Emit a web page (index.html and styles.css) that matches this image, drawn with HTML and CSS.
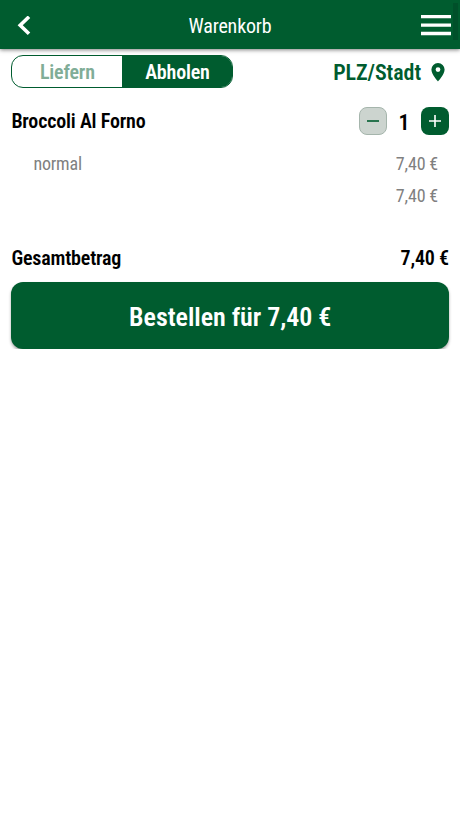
FILE: index.html
```
<!DOCTYPE html>
<html lang="de">
<head>
    <meta charset="UTF-8">
    <meta name="viewport" content="width=device-width, initial-scale=1.0">
    <title>Warenkorb</title>
    <link rel="stylesheet" href="styles.css">
</head>
<body>
    <header class="header">
        <svg class="icon-back" width="14" height="20" viewBox="0 0 14 20"><path d="M12 .8L3.2 9.2l8.8 8.6"/></svg>
        <h1 class="title">Warenkorb</h1>
        <svg class="icon-menu" width="30" height="21" viewBox="0 0 30 21"><path d="M0 1.7h30M0 10.2h30M0 18.5h30"/></svg>
        <span class="scrollbar"></span>
    </header>
    <main class="content">
        <div class="options">
            <div class="toggle">
                <span class="toggle-item">Liefern</span>
                <span class="toggle-item active">Abholen</span>
            </div>
            <div class="location">
                <span>PLZ/Stadt</span>
                <svg width="14" height="19" viewBox="0 0 14 19"><path fill-rule="evenodd" d="M7 0a6.6 6.6 0 0 0-6.6 6.6C.4 11.5 7 18.5 7 18.5s6.6-7 6.6-11.9A6.6 6.6 0 0 0 7 0zm0 4.2a2.4 2.4 0 1 1 0 4.8 2.4 2.4 0 0 1 0-4.8z"/></svg>
            </div>
        </div>
        <div class="item">
            <span class="item-name">Broccoli Al Forno</span>
            <div class="counter">
                <button class="btn minus"><svg width="12" height="12" viewBox="0 0 12 12"><path d="M0 6h12"/></svg></button>
                <span class="amount">1</span>
                <button class="btn plus"><svg width="12" height="12" viewBox="0 0 12 12"><path d="M0 6h12M6 0v12"/></svg></button>
            </div>
        </div>
        <div class="detail">
            <span>normal</span>
            <span>7,40 €</span>
        </div>
        <div class="detail sum">
            <span>7,40 €</span>
        </div>
        <div class="total">
            <span>Gesamtbetrag</span>
            <span>7,40 €</span>
        </div>
        <button class="order">Bestellen für 7,40 €</button>
    </main>
</body>
</html>
```
FILE: styles.css
```
* {
    box-sizing: border-box;
}
body {
    margin: 0;
    font-family: "Roboto Condensed", Roboto, sans-serif;
    font-stretch: 75%;
    letter-spacing: -0.18px;
    background-color: #fff;
    color: #000;
}
button {
    border: none;
    padding: 0;
    font: inherit;
    letter-spacing: inherit;
}
.header {
    position: relative;
    height: 49px;
    padding: 2px 9px 0 17px;
    display: flex;
    align-items: center;
    justify-content: space-between;
    background-color: #005c2f;
    box-shadow: 0 1px 4px rgba(0, 0, 0, 0.5);
}
.header path {
    fill: none;
    stroke: #fff;
    stroke-width: 3.6;
}
.header .icon-menu path {
    stroke-width: 3.3;
}
.title {
    margin: 0;
    padding-left: 8px;
    font-size: 20px;
    font-weight: 400;
    color: #fff;
}
.scrollbar {
    position: absolute;
    top: 3px;
    right: 2px;
    width: 5px;
    height: 37px;
    background-color: #00502a;
}
.content {
    padding: 6px 11px 0 11.4px;
}
.options, .item, .detail, .total {
    display: flex;
    align-items: center;
    justify-content: space-between;
}
.options {
    height: 33px;
}
.toggle {
    display: flex;
    width: 222px;
    height: 33px;
    border: 1px solid #005c2f;
    border-radius: 12px;
    overflow: hidden;
}
.toggle-item {
    flex: 1;
    line-height: 33px;
    text-align: center;
    font-size: 20px;
    font-weight: 600;
    color: #80ad97;
}
.toggle-item.active {
    background-color: #005c2f;
    color: #fff;
}
.location {
    display: flex;
    align-items: center;
    gap: 10px;
    padding: 1px 4px 0 0;
    font-size: 22px;
    font-weight: 600;
    letter-spacing: -0.08px;
    color: #005c2f;
}
.location path {
    fill: #005c2f;
}
.item {
    margin-top: 19px;
    height: 28px;
    font-size: 20px;
    font-weight: 600;
}
.counter {
    display: flex;
    align-items: center;
}
.amount {
    width: 34px;
    padding-top: 2px;
    text-align: center;
    font-size: 22px;
}
.btn {
    display: flex;
    align-items: center;
    justify-content: center;
    width: 28px;
    height: 28px;
    border-radius: 8px;
}
.btn path {
    stroke-width: 1.6;
}
.minus {
    background-color: #ccd4cf;
    border: 1px solid #a5b5ac;
}
.minus path {
    stroke: #005c2f;
}
.plus {
    background-color: #005c2f;
}
.plus path {
    stroke: #fff;
}
.detail {
    height: 32px;
    margin-top: 12px;
    padding: 0 11px 0 22px;
    font-size: 18px;
    color: #808080;
}
.sum {
    margin-top: 0;
    justify-content: flex-end;
}
.total {
    height: 30px;
    margin-top: 32px;
    font-size: 20px;
    font-weight: 600;
}
.order {
    display: block;
    width: 100%;
    height: 67px;
    margin-top: 9px;
    padding-top: 2px;
    border-radius: 12px;
    background-color: #005c2f;
    box-shadow: 0 2px 3px rgba(0, 0, 0, 0.35);
    font-size: 26px;
    font-weight: 600;
    letter-spacing: -0.04px;
    color: #fff;
}
```
